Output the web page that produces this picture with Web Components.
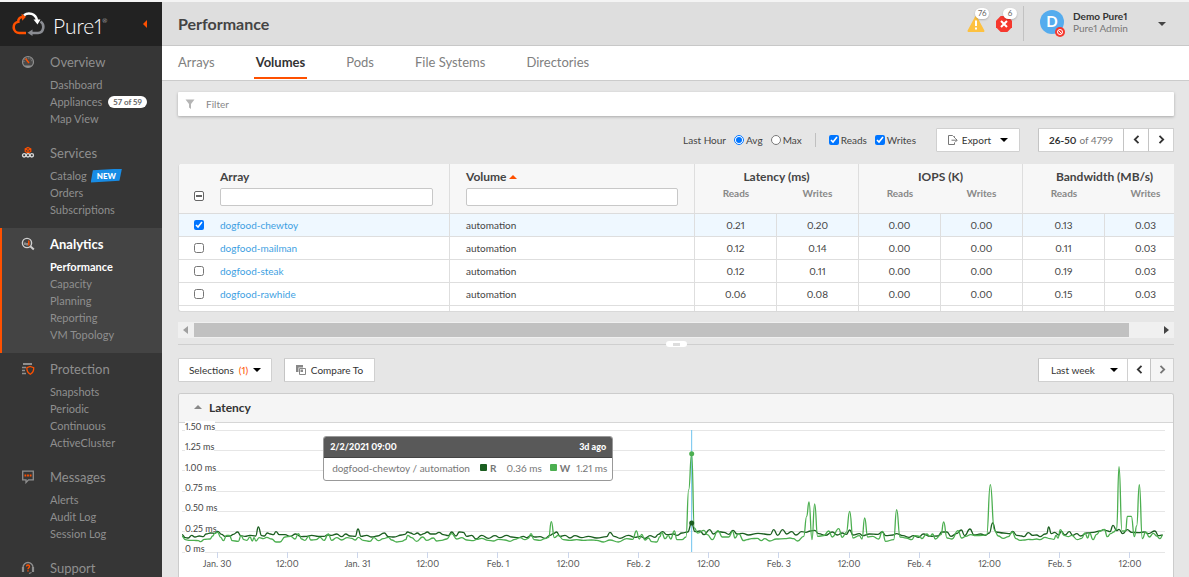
<!DOCTYPE html>
<html lang="en">
<head>
<meta charset="utf-8">
<title>Pure1 - Performance</title>
<style>
  html, body { margin: 0; height: 100%; }
  body { font-family: Lato, "Open Sans", sans-serif; font-size: 10px; font-variant-numeric: proportional-nums; color: #444; background: #f4f4f4; overflow: hidden; }
</style>
</head>
<body>
<pure-app></pure-app>

<script>
/* Registers a custom element whose shadow root is cloned from a template. */
function element(name, markup, ready) {
  const template = document.createElement('template');
  template.innerHTML = '<style>*{box-sizing:border-box}button,input,select{font:inherit;font-variant-numeric:inherit;color:inherit;margin:0}button{cursor:pointer}a{color:inherit;text-decoration:none}svg{display:block}</style>' + markup;
  customElements.define(name, class extends HTMLElement {
    constructor() {
      super();
      this.attachShadow({ mode: 'open' }).append(template.content.cloneNode(true));
    }
    connectedCallback() { if (ready) ready.call(this, this.shadowRoot); }
  });
}

element('caret-icon', `
  <style>:host{display:block;flex:none;border:4px solid transparent;border-top-color:currentColor;border-bottom:0}
  :host([up]){border:4px solid transparent;border-bottom-color:currentColor;border-top:0}</style>`);

/* ---------- Sidebar ---------- */

element('side-section', `
  <style>
    :host{display:block;padding:6px 0 10px 28px;color:#8f8f8f}
    :host([active]){background:#444;box-shadow:inset 2px 0 #fe5000}
    h2{display:flex;align-items:center;height:20px;margin:0 0 4px -7px;font-size:13px;font-weight:400}
    .icon{width:14px;margin-right:15px}
    nav{display:flex;flex-direction:column;padding-left:22px;font-size:11px;line-height:17px}
    :host([active]) h2{color:#fff;font-weight:700}
  </style>
  <h2><span class="icon"><slot name="icon"></slot></span><slot name="title"></slot></h2>
  <nav><slot></slot></nav>`);

element('side-bar', `
  <style>
    :host{display:block;flex:none;width:162px;background:#363636;overflow:hidden;border-bottom:1px solid #777}
    header{display:flex;align-items:center;height:44px;padding:0 15px 0 12px;background:#222;color:#fff}
    header svg{margin-right:8px}
    header b{padding-top:3px;font-size:21px;font-weight:300;line-height:24px}
    sup{font-size:6px;line-height:0;vertical-align:11px}
    .fold{margin-left:auto;border:0;padding:0;width:4px;height:8px;background:#fe5000;clip-path:polygon(100% 0,100% 100%,0 50%)}
    a{display:flex;align-items:center}
    a.on{color:#fff;font-weight:700}
    .count{margin-left:6px;padding:0 5px;border-radius:6px;background:#fff;color:#666;font-size:8px;line-height:12px;font-weight:700}
    .new{margin-left:4px;padding:0 6px;background:#188ce5;color:#fff;font-size:8px;font-weight:900;line-height:14px;clip-path:polygon(7% 12%,100% 0,92% 88%,0 100%)}
  </style>
  <header>
    <svg width="33" height="24" viewBox="0 0 33 24" fill="none" stroke-width="2.6">
      <path d="M14 21H7.500a5.700 5.700 0 0 1-1.200-11.300C6 7 8 5.300 10.500 5" stroke="#fe5000"/>
      <path d="M9.500 1.800l4.500 3-3.800 4z" fill="#fe5000"/>
      <path d="M12 3.200C16.500-.2 23.500 1.500 25 8" stroke="#fff"/><path d="M21.500 7.500h7l-3 5z" fill="#fff"/>
      <path d="M28.500 9.500c4.500 3 3.500 11-2.500 11.500h-6" stroke="#8a8c92"/><path d="M20.500 17.500v6.500l-5-3.200z" fill="#8a8c92"/>
    </svg>
    <b>Pure1<sup>®</sup></b>
    <button class="fold" aria-label="Collapse menu"></button>
  </header>
  <side-section>
    <svg slot="icon" width="14" height="14" viewBox="0 0 14 14"><circle cx="7" cy="7" r="5.500" fill="#4a4a4a" stroke="#8f8f8f" stroke-width="1.200"/><path d="M3 10.500h8a5 5 0 0 1-8 0z" fill="#8f8f8f"/><path d="M3 7a4 4 0 0 1 8 0" fill="none" stroke="#8f8f8f" stroke-dasharray="1 1"/><path d="M4.500 3.500L8 8" stroke="#fe5000" stroke-width="1.400"/></svg>
    <span slot="title">Overview</span>
    <a href="#">Dashboard</a><a href="#">Appliances<span class="count">57 of 59</span></a><a href="#">Map View</a>
  </side-section>
  <side-section>
    <svg slot="icon" width="14" height="14" viewBox="0 0 14 14" fill="none"><path d="M7 1.500l2.800 1.400v2.600L7 7 4.200 5.500V2.900zM4.200 3L7 4.300 9.800 3M7 4.300V7" stroke="#fe5000" stroke-width="1.200"/><g stroke="#d8d8d8" stroke-width="1.300"><circle cx="3.200" cy="9.300" r="1.700"/><circle cx="7" cy="9.300" r="1.700"/><circle cx="10.800" cy="9.300" r="1.700"/></g></svg>
    <span slot="title">Services</span>
    <a href="#">Catalog<span class="new">NEW</span></a><a href="#">Orders</a><a href="#">Subscriptions</a>
  </side-section>
  <side-section active>
    <svg slot="icon" width="14" height="14" viewBox="0 0 14 14" fill="none"><circle cx="6" cy="6" r="4.600" stroke="#d0d0d0" stroke-width="1.400"/><path d="M9.300 9.300l3.500 3.300" stroke="#d0d0d0" stroke-width="2"/><path d="M4 8V5.500M6 8.500V6" stroke="#d0d0d0"/><path d="M7.800 8.500V3.500" stroke="#fe5000" stroke-width="1.500"/></svg>
    <span slot="title">Analytics</span>
    <a href="#" class="on">Performance</a><a href="#">Capacity</a><a href="#">Planning</a><a href="#">Reporting</a><a href="#">VM Topology</a>
  </side-section>
  <side-section>
    <svg slot="icon" width="14" height="14" viewBox="0 0 14 14" fill="none"><path d="M2 2h9" stroke="#8f8f8f" stroke-width="2"/><path d="M1 5.500h4M1 8.500h3M1 11.500h4" stroke="#8f8f8f" stroke-width="1.300"/><path d="M9.300 4.500l3.400 1.200c.2 3-.8 5-3.400 6.500C6.700 10.700 5.700 8.700 5.900 5.700z" stroke="#fe5000" stroke-width="1.300"/></svg>
    <span slot="title">Protection</span>
    <a href="#">Snapshots</a><a href="#">Periodic</a><a href="#">Continuous</a><a href="#">ActiveCluster</a>
  </side-section>
  <side-section>
    <svg slot="icon" width="14" height="14" viewBox="0 0 14 14" fill="none"><path d="M1.700 1.200h10.600v8.600H7.500L5 12.500V9.800H1.700z" stroke="#8f8f8f" stroke-width="1.300"/><path d="M3.500 5.500h7" stroke="#fe5000" stroke-width="1.800" stroke-dasharray="1.800 .8"/></svg>
    <span slot="title">Messages</span>
    <a href="#">Alerts</a><a href="#">Audit Log</a><a href="#">Session Log</a>
  </side-section>
  <side-section>
    <svg slot="icon" width="14" height="14" viewBox="0 0 14 14" fill="none"><path d="M2 9V6.500a5 5 0 0 1 10 0V9M10.500 11.500L8 12.500" stroke="#8f8f8f" stroke-width="1.300"/><path d="M2 6v5M12 6v5" stroke="#8f8f8f" stroke-width="2.200"/><path d="M5.500 5.500c0-2 3-2 3 0 0 1.300-1.500 1.300-1.500 2.700M7 9.200v1.300" stroke="#fe5000" stroke-width="1.400"/></svg>
    <span slot="title">Support</span>
  </side-section>`);

/* ---------- Page header ---------- */

element('page-header', `
  <style>
    :host{display:flex;align-items:center;height:44px;padding:0 23px 0 16px;background:#dedede;border-bottom:1px solid #c8c8c8}
    h1{margin:0;font-size:16px;font-weight:700;flex:1}
    .alert{position:relative;width:18px;height:18px;margin-right:10px}
    .alert span{position:absolute;left:8px;bottom:14px;min-width:14px;padding:0 3px;border-radius:6px;background:#fff;color:#666;font-size:8px;line-height:11px;text-align:center;box-shadow:0 1px 2px #0003}
    .user{display:flex;align-items:center;height:35px;padding:0 0 0 16px;border:0;border-left:1px solid #c2c2c2;background:none;text-align:left}
    .user div{width:85px;padding-bottom:4px;font-size:10px;line-height:12px;color:#777}
    .user b{display:block;color:#333}
    .avatar{margin-right:7px}
  </style>
  <h1>Performance</h1>
  <div class="alert"><svg width="18" height="18" viewBox="0 0 18 18"><path d="M9 2l7.500 14h-15z" fill="#fdc140" stroke="#fdc140" stroke-width="2" stroke-linejoin="round"/><path d="M9 5.500v5.500M9 12.500v2" stroke="#fff" stroke-width="2"/></svg><span>76</span></div>
  <div class="alert"><svg width="18" height="18" viewBox="0 0 18 18"><path d="M5.700 1h6.600L17 5.700v6.600L12.300 17H5.700L1 12.300V5.700z" fill="#f6382e"/><path d="M6 6l6 6M12 6l-6 6" stroke="#fff" stroke-width="2"/></svg><span>6</span></div>
  <button class="user">
    <svg class="avatar" width="26" height="28" viewBox="0 0 26 28"><circle cx="12" cy="12" r="12" fill="#55acee"/><text x="12" y="17" text-anchor="middle" font-size="15" font-weight="700" fill="#fff">D</text><circle cx="20" cy="22" r="5" fill="#f6382e"/><circle cx="20" cy="22" r="2.500" fill="none" stroke="#fff"/><path d="M18.300 20.300l3.400 3.400" stroke="#fff"/></svg>
    <div><b>Demo Pure1</b>Pure1 Admin</div>
    <caret-icon></caret-icon>
  </button>`);

element('page-tabs', `
  <style>
    :host{display:block;height:35px;background:#fff;border-bottom:1px solid #ccc}
    nav{display:flex;gap:37px;padding-left:14px;font-size:13px;line-height:32px;color:#808080}
    a{padding:0 2px;height:33px}
    .on{color:#333;font-weight:700;border-bottom:2px solid #fe5000}
  </style>
  <nav><a href="#">Arrays</a><a href="#" class="on">Volumes</a><a href="#">Pods</a><a href="#">File Systems</a><a href="#">Directories</a></nav>`);

element('filter-bar', `
  <style>
    :host{display:flex;align-items:center;height:24px;padding-left:7px;background:#fff;box-shadow:0 1px 3px #0004;border-radius:1px}
    input{flex:1;margin-left:11px;padding:0;border:0;background:none;outline:0;font-size:10px}
    input::placeholder{color:#888}
  </style>
  <svg width="10" height="10" viewBox="0 0 10 10"><path d="M.5.500h9L6 5v5L4 8.500V5z" fill="#b5b5b5"/></svg>
  <input type="text" placeholder="Filter" aria-label="Filter">`);

/* ---------- Buttons ---------- */

element('nav-chevron', `
  <style>:host{display:inline-block}:host([next]){transform:scaleX(-1)}</style>
  <svg width="7" height="9" viewBox="0 0 7 9" fill="none" stroke="currentColor" stroke-width="1.800"><path d="M5.500.800L1.800 4.500l3.700 3.700"/></svg>`);

const boxed = `
  .box{display:flex;align-items:center;justify-content:center;height:24px;padding:0 0 1px;border:1px solid #d0d0d0;background:#fff;border-radius:1px;color:#333}
  .box + .box{border-left-color:#c4c4c4;margin-left:-1px}
  .step{width:26px}
  .step:disabled{background:#f5f5f5;color:#777}`;

element('list-toolbar', `
  <style>${boxed}
    :host{display:flex;align-items:center;justify-content:flex-end;height:24px}
    label{display:flex;align-items:center;margin-left:8px}
    label input{width:10px;height:10px;margin-right:2px}
    .opts{padding-right:13px;margin-right:5px;border-right:1px solid #c0c0c0;display:flex;line-height:14px}
    .export{width:84px;margin-left:20px;margin-right:19px;gap:4px}
    .export caret-icon{margin-left:5px;color:#000}
    .range{width:86px;color:#777}
    .range b{color:#333;margin-right:3px}
  </style>
  <span>Last Hour</span>
  <div class="opts"><label><input type="radio" name="agg" checked>Avg</label><label><input type="radio" name="agg">Max</label></div>
  <label><input type="checkbox" checked>Reads</label><label><input type="checkbox" checked>Writes</label>
  <button class="box export"><svg width="10" height="10" viewBox="0 0 10 10" fill="none" stroke="#777"><path d="M6.500 3V1.500h-1L4.500.500h-4v9h6V7.500M3.500 5.200h5.500M7.200 3.200l2 2-2 2"/></svg>Export<caret-icon></caret-icon></button>
  <span class="box range"><b>26-50</b>of 4799</span>
  <button class="box step" aria-label="Previous page"><nav-chevron></nav-chevron></button>
  <button class="box step" aria-label="Next page"><nav-chevron next></nav-chevron></button>`);

element('chart-toolbar', `
  <style>${boxed}
    :host{display:flex;align-items:center;height:24px}
    .selections{width:94px;gap:5px}
    .selections em{font-style:normal;color:#fe5000}
    .selections caret-icon,.period caret-icon{color:#000}
    .compare{width:91px;margin:0 auto 0 12px!important;gap:5px}
    .step{width:24px}
    .period{position:relative;width:90px}
    .period select{appearance:none;width:100%;height:100%;padding:0 0 0 12px;border:0;background:none;outline:0}
    .period caret-icon{position:absolute;right:9px;pointer-events:none}
  </style>
  <button class="box selections">Selections <em>(1)</em><caret-icon></caret-icon></button>
  <button class="box compare"><svg width="10" height="10" viewBox="0 0 10 10" fill="none"><path d="M0 0h7v2.500H2.500V7H0z" fill="#888"/><path d="M3.500 3.500h6v6h-6z" stroke="#888"/><path d="M4.500 4.500H7V7H4.500z" fill="#888"/></svg>Compare To</button>
  <div class="box period"><select aria-label="Period"><option>Last week</option></select><caret-icon></caret-icon></div>
  <button class="box step" aria-label="Earlier"><nav-chevron></nav-chevron></button>
  <button class="box step" aria-label="Later" disabled><nav-chevron next></nav-chevron></button>`);

/* ---------- Volumes table ---------- */

element('volumes-table', `
  <style>
    :host{display:block;height:148px;overflow:hidden;background:#fff;border:1px solid #d9d9d9;border-width:0 0 1px 1px;border-radius:3px 0 0 3px}
    table{width:calc(100% + 13px);table-layout:fixed;border-collapse:separate;border-spacing:0}
    th,td{padding:0;font-weight:400;text-align:center}
    thead th{background:#f7f7f7}
    thead tr:first-child th{height:24px;font-size:12px;font-weight:700}
    thead tr+tr th{height:26px;font-size:10px;font-weight:700;color:#888;vertical-align:top;line-height:10px}
    th.b,thead tr+tr th{border-bottom:1px solid #dcdcdc}
    .l{text-align:left}
    .r,td{border-right:1px solid #dedede}
    td.c{border-right:0}
    thead .txt{vertical-align:top;padding:5px 16px 0 0;line-height:16px}
    .txt span{display:flex;align-items:center;gap:3px}
    .txt caret-icon{color:#fe5000}
    .txt.v,td.v{padding-left:16px}
    .txt input{display:block;width:100%;height:18px;margin-top:3px;border:1px solid #c8c8c8;border-radius:2px;background:#fff}
    thead .c{vertical-align:bottom;padding-bottom:12px}
    .c input{display:block;width:10px;height:10px;margin:0 0 0 15px}
    .c input:indeterminate{appearance:none;border:1px solid #666;border-radius:2px;background:linear-gradient(#666,#666) center/6px 2px no-repeat #fff}
    tbody td{height:23px;border-bottom:1px solid #dedede;line-height:14px}
    tbody tr.on td{background:#eff8ff}
    td a{color:#3d9fe2}
  </style>
  <table>
    <colgroup><col style="width:41px"><col style="width:230px"><col><col style="width:82px"><col style="width:82px"><col style="width:82px"><col style="width:82px"><col style="width:82px"><col style="width:82px"></colgroup>
    <thead>
      <tr><th class="b c" rowspan="2"><input type="checkbox" aria-label="Select all"></th>
        <th class="b l r txt" rowspan="2"><span>Array</span><input type="text" aria-label="Filter by array"></th>
        <th class="b l r txt v" rowspan="2"><span>Volume<caret-icon up></caret-icon></span><input type="text" aria-label="Filter by volume"></th>
        <th class="r" colspan="2">Latency (ms)</th><th class="r" colspan="2">IOPS (K)</th><th class="r" colspan="2">Bandwidth (MB/s)</th></tr>
      <tr><th>Reads</th><th class="r">Writes</th><th>Reads</th><th class="r">Writes</th><th>Reads</th><th class="r">Writes</th></tr>
    </thead>
    <tbody></tbody>
  </table>`, function (root) {
  const rows = [
    ['dogfood-chewtoy', '0.21', '0.20', '0.00', '0.00', '0.13', '0.03'],
    ['dogfood-mailman', '0.12', '0.14', '0.00', '0.00', '0.11', '0.03'],
    ['dogfood-steak', '0.12', '0.11', '0.00', '0.00', '0.19', '0.03'],
    ['dogfood-rawhide', '0.06', '0.08', '0.00', '0.00', '0.15', '0.03']
  ];
  root.querySelector('thead .c input').indeterminate = true;
  root.querySelector('tbody').innerHTML = rows.map(([name, ...v], i) =>
    `<tr class="${i ? '' : 'on'}"><td class="c"><input type="checkbox" aria-label="${name}" ${i ? '' : 'checked'}></td><td class="l"><a href="#">${name}</a></td><td class="l v">automation</td>${v.map(n => `<td>${n}</td>`).join('')}</tr>`).join('')
    + '<tr><td class="c"></td>' + '<td></td>'.repeat(8) + '</tr>';
});

element('scroll-strip', `
  <style>
    :host{display:flex;align-items:center;height:16px;background:#f0f0f0;padding:0 5px;color:#a0a0a0}
    i{width:5px;height:8px;background:currentColor;clip-path:polygon(100% 0,100% 100%,0 50%)}
    i:last-child{color:#444;clip-path:polygon(0 0,100% 50%,0 100%)}
    .track{flex:1;margin:0 6px}
    .thumb{width:97%;height:14px;background:#c1c1c1}
  </style><i></i><div class="track"><div class="thumb"></div></div><i></i>`);

element('split-handle', `
  <style>
    :host{display:flex;align-items:center;justify-content:center;height:6px;background:linear-gradient(#cfcfcf,#cfcfcf) center/100% 1px no-repeat}
    i{width:21px;height:6px;border-radius:3px;background:linear-gradient(#ddd,#ddd) center/7px 3px no-repeat #fff}
  </style><i></i>`);

/* ---------- Latency chart ---------- */

element('chart-tooltip', `
  <style>
    :host{display:block;width:290px;border-radius:3px;overflow:hidden;color:#777;border:1px solid #999;background:#ffffffee;white-space:nowrap}
    header{display:flex;justify-content:space-between;padding:0 6px;background:#595959;border-bottom:1px solid #444;color:#fff;font-size:9px;font-weight:900;line-height:20px}
    p{display:flex;align-items:center;margin:0;padding:0 8px 3px;line-height:18px;height:22px}
    i{flex:none;width:7px;height:7px;border-radius:1px;margin:0 3px 0 10px}
    b{margin-right:10px}
    i + b + span + i{margin-left:8px}
    b.w{margin-right:6px}
  </style>
  <header><span>2/2/2021 09:00</span><span>3d ago</span></header>
  <p><span>dogfood-chewtoy / automation</span><i style="background:#1b5e20"></i><b>R</b><span>0.36 ms</span><i style="background:#4caf50"></i><b class="w">W</b><span>1.21 ms</span></p>`);

/* Series points: x counts thirds of a pixel along the week, y is measured down from 1.50 ms (366 = 0 ms). */
const READS = '0,314 10,323 19,324 29,316 39,321 52,318 64,320 72,312 86,309 98,310 107,304 119,313 129,319 144,318 154,313 167,306 176,317 189,319 204,316 221,318 229,291 239,317 247,318 256,309 265,312 274,314 282,305 292,314 309,314 324,319 341,312 357,320 374,319 389,316 409,319 426,319 436,315 449,316 464,312 479,320 491,312 504,318 520,319 528,297 537,319 554,316 569,321 586,318 607,309 619,320 636,321 659,315 669,313 677,306 686,309 696,313 706,309 716,315 726,311 736,306 746,312 759,312 771,307 784,314 799,317 809,306 822,318 832,306 844,307 854,319 869,316 882,327 899,316 919,325 939,317 954,323 974,316 989,321 1009,323 1024,319 1034,323 1046,317 1059,321 1074,320 1089,325 1104,316 1114,311 1124,306 1134,319 1149,316 1164,324 1179,317 1199,323 1219,319 1244,324 1274,320 1284,307 1296,319 1314,325 1339,316 1359,322 1374,319 1389,325 1404,317 1419,322 1429,313 1442,305 1454,314 1475,312 1485,316 1500,309 1517,306 1529,279 1539,305 1554,303 1566,314 1583,299 1594,312 1608,305 1626,307 1640,313 1653,301 1665,312 1682,310 1699,315 1728,310 1765,314 1775,299 1787,316 1802,299 1814,312 1829,305 1842,315 1859,305 1872,307 1885,303 1898,301 1910,311 1930,316 1951,306 1966,315 1981,309 1993,313 2003,300 2013,315 2032,311 2042,317 2062,312 2087,313 2101,306 2111,317 2133,315 2143,311 2163,317 2181,322 2194,317 2210,322 2224,312 2244,319 2267,318 2280,306 2295,306 2307,319 2323,311 2338,300 2348,317 2364,297 2376,315 2396,312 2410,316 2422,309 2432,279 2442,306 2464,309 2484,311 2492,304 2504,316 2519,318 2526,320 2539,308 2552,316 2564,315 2574,320 2589,312 2594,311 2600,291 2608,311 2618,307 2630,315 2638,304 2649,315 2662,305 2672,316 2684,311 2696,318 2714,309 2734,307 2754,303 2766,299 2774,302 2784,305 2793,286 2804,302 2811,298 2822,311 2836,299 2849,307 2869,308 2886,306 2899,311 2919,303 2929,317 2942,315';
const WRITES = '0,319 10,329 24,331 36,331 49,332 56,335 67,328 84,327 92,318 98,310 107,307 116,322 124,332 134,316 142,316 151,332 169,334 177,317 186,329 194,331 204,321 211,333 216,323 222,333 232,323 244,326 254,322 269,327 282,336 294,336 309,321 326,319 339,327 349,311 359,327 369,331 380,319 386,330 402,329 414,322 426,331 439,312 449,331 464,323 479,330 496,323 509,325 520,330 529,322 544,331 564,334 576,323 589,332 604,326 619,322 629,330 644,336 659,334 671,329 677,316 689,323 704,334 722,321 734,331 754,324 764,333 779,331 794,327 809,311 824,327 839,323 854,330 874,332 884,328 899,325 919,331 934,333 949,328 969,330 984,334 999,328 1014,323 1029,329 1039,325 1047,311 1056,329 1074,331 1089,326 1100,322 1108,275 1117,323 1129,316 1144,329 1164,331 1184,329 1204,331 1229,330 1244,331 1264,336 1284,330 1309,336 1334,326 1352,328 1363,303 1372,327 1379,313 1389,330 1399,324 1409,335 1424,336 1434,320 1439,307 1449,326 1459,317 1466,327 1477,303 1485,329 1500,329 1512,321 1520,180 1529,71 1537,294 1547,309 1566,301 1576,314 1591,329 1608,302 1621,321 1640,321 1652,304 1659,324 1670,311 1685,332 1695,329 1708,326 1726,325 1738,332 1748,326 1763,333 1783,327 1809,326 1824,324 1834,326 1847,333 1865,319 1874,259 1881,216 1890,329 1898,222 1907,319 1925,317 1940,303 1951,321 1970,296 1981,322 1993,307 2003,244 2013,324 2032,317 2040,327 2048,264 2057,321 2072,319 2090,327 2101,304 2111,334 2135,329 2144,239 2154,321 2173,324 2189,329 2199,317 2214,319 2219,326 2234,312 2244,319 2252,312 2260,327 2277,314 2285,276 2295,324 2310,327 2328,302 2339,324 2351,319 2366,314 2381,317 2401,316 2414,314 2425,164 2437,300 2449,318 2464,325 2479,320 2491,306 2502,326 2514,331 2529,330 2539,328 2549,329 2564,327 2574,329 2589,322 2604,326 2616,328 2622,316 2628,324 2635,299 2646,316 2659,320 2669,316 2686,329 2699,325 2709,309 2717,324 2723,309 2733,329 2744,313 2754,303 2767,298 2776,320 2786,311 2795,306 2804,298 2811,110 2820,303 2831,303 2836,259 2848,259 2857,320 2864,288 2872,164 2881,326 2891,306 2902,321 2914,310 2924,318 2934,326 2942,316';

function smooth(points) {
  const p = points.split(' ').map(s => s.split(',').map(Number));
  return p.map(([x, y], i) => {
    if (!i) return `M${x} ${y}`;
    const m = (x + p[i - 1][0]) / 2;
    return `C${m} ${p[i - 1][1]} ${m} ${y} ${x} ${y}`;
  }).join('');
}

element('latency-chart', `
  <style>
    :host{display:block;position:relative;padding:0 8px 0 3px;background:#fff}
    .area{display:grid;padding-top:7px}
    .area > *{grid-area:1/1}
    svg{width:100%;height:122px;overflow:visible}
    svg *{vector-effect:non-scaling-stroke}
    .y{margin:-13px 0 -7px 3px;display:grid;grid-auto-rows:1fr;height:142px;font-size:9px;justify-items:start;align-items:center}
    .y span{background:#fff;line-height:12px}
    .x{display:flex;color:#555;font-size:9px}
    .x span{flex:1;text-align:center;line-height:12px}
    .x span::before{content:"";display:block;width:1px;height:6px;margin:0 auto;background:#ccd6eb}
    chart-tooltip{position:absolute;left:14.5%;top:13px}
  </style>
  <div class="area">
    <svg viewBox="0 0 2949 366" preserveAspectRatio="none" fill="none">
      <path d="M0 0H2949M0 61H2949M0 122H2949M0 183H2949M0 244H2949M0 305H2949M0 366H2949" stroke="#e6e6e6" shape-rendering="crispEdges"/>
    </svg>
    <div class="y"><span>1.50 ms</span><span>1.25 ms</span><span>1.00 ms</span><span>0.75 ms</span><span>0.50 ms</span><span>0.25 ms</span><span>0 ms</span></div>
    <svg viewBox="0 0 2949 366" preserveAspectRatio="none" fill="none">
      <path d="M1529 0V366" stroke="#6fc3ee"/>
      <path class="reads" stroke="#1b5e20" stroke-width="1.300"/>
      <path class="writes" stroke="#4caf50" stroke-width="1.300"/>
      <path d="M1529 71h.1" stroke="#4caf50" stroke-width="5" stroke-linecap="round"/>
      <path d="M1529 279h.1" stroke="#1b5e20" stroke-width="5" stroke-linecap="round"/>
    </svg>
  </div>
  <div class="x"><span>Jan. 30</span><span>12:00</span><span>Jan. 31</span><span>12:00</span><span>Feb. 1</span><span>12:00</span><span>Feb. 2</span><span>12:00</span><span>Feb. 3</span><span>12:00</span><span>Feb. 4</span><span>12:00</span><span>Feb. 5</span><span>12:00</span></div>
  <chart-tooltip></chart-tooltip>`, function (root) {
  root.querySelector('.reads').setAttribute('d', smooth(READS));
  root.querySelector('.writes').setAttribute('d', smooth(WRITES));
});

element('chart-panel', `
  <style>
    :host{display:flex;flex-direction:column;border:1px solid #ccc;border-bottom:0;border-radius:3px 3px 0 0;background:#fff;overflow:hidden}
    header{flex:none;display:flex;align-items:center;height:29px;padding:0 0 2px 15px;background:#f5f5f5;border-bottom:1px solid #d6d6d6}
    header caret-icon{color:#888}
    h2{margin:0 0 0 7px;font-size:12px;color:#333}
  </style>
  <header><caret-icon up></caret-icon><h2><slot name="title"></slot></h2></header>
  <slot></slot>`);

element('pure-app', `
  <style>
    :host{display:flex;height:100vh;padding-top:2px}
    main{flex:1;min-width:0;display:flex;flex-direction:column;background:#e6e6e6}
    .content{flex:1;min-height:0;display:flex;flex-direction:column;padding:11px 15px 0 16px}
    .content > *{flex:none}
    list-toolbar{margin:12px 0}
    scroll-strip{margin:10px 0 3px}
    chart-toolbar{margin:11px 0}
    .content > chart-panel{flex:1 0 auto}
  </style>
  <side-bar></side-bar>
  <main>
    <page-header></page-header>
    <page-tabs></page-tabs>
    <div class="content">
      <filter-bar></filter-bar>
      <list-toolbar></list-toolbar>
      <volumes-table></volumes-table>
      <scroll-strip></scroll-strip>
      <split-handle></split-handle>
      <chart-toolbar></chart-toolbar>
      <chart-panel><span slot="title">Latency</span><latency-chart></latency-chart></chart-panel>
    </div>
  </main>`);
</script>
</body>
</html>
